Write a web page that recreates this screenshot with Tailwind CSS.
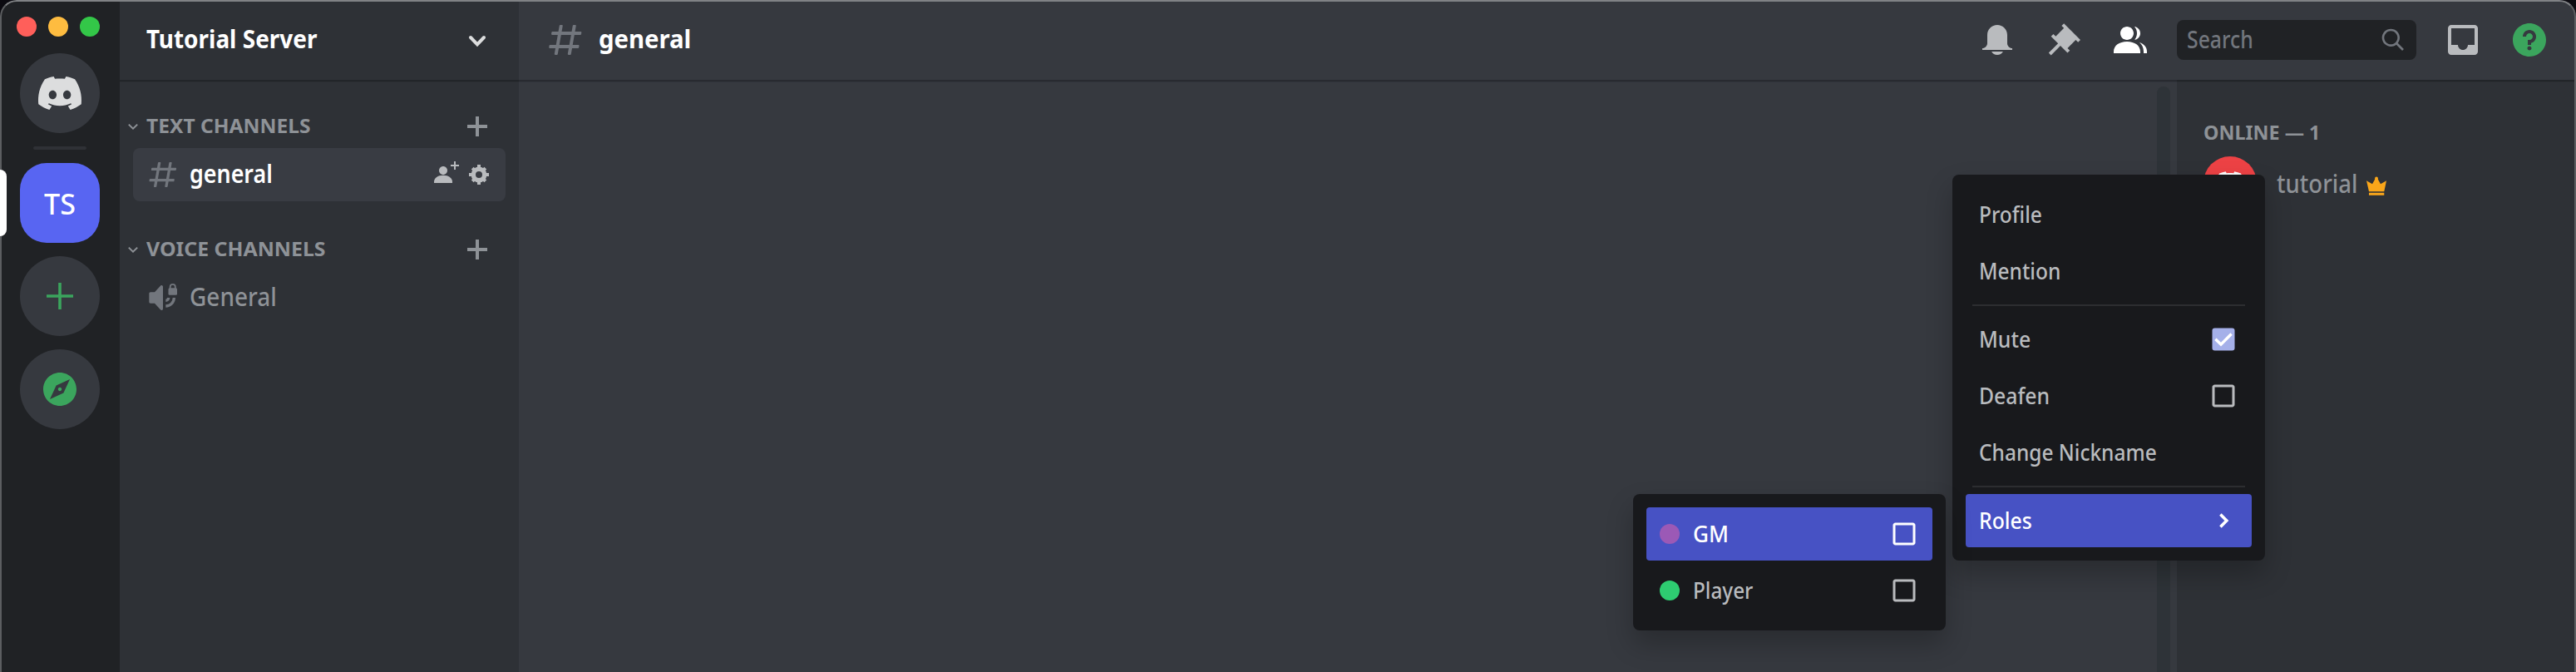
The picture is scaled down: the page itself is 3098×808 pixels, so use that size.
<!DOCTYPE html>
<html lang="en">
<head>
<meta charset="utf-8">
<title>Tutorial Server</title>
<script src="https://cdn.jsdelivr.net/npm/@tailwindcss/browser@4"></script>
</head>
<body class="bg-[#0b0a10] overflow-hidden font-['Noto_Sans',sans-serif]">
<svg class="hidden">
  <symbol id="hash" viewBox="0 0 24 24"><path fill-rule="evenodd" clip-rule="evenodd" d="M5.88657 21C5.57547 21 5.3399 20.7189 5.39427 20.4126L6.00001 17H2.59511C2.28449 17 2.04905 16.7198 2.10259 16.4138L2.27759 15.4138C2.31946 15.1746 2.52722 15 2.77011 15H6.35001L7.41001 9H4.00511C3.69449 9 3.45905 8.71977 3.51259 8.41381L3.68759 7.41381C3.72946 7.17456 3.93722 7 4.18011 7H7.76001L8.39677 3.41262C8.43914 3.17391 8.64664 3 8.88907 3H9.87344C10.1845 3 10.4201 3.28107 10.3657 3.58738L9.76001 7H15.76L16.3968 3.41262C16.4391 3.17391 16.6466 3 16.8891 3H17.8734C18.1845 3 18.4201 3.28107 18.3657 3.58738L17.76 7H21.1649C21.4755 7 21.711 7.28023 21.6574 7.58619L21.4824 8.58619C21.4406 8.82544 21.2328 9 20.9899 9H17.41L16.35 15H19.7549C20.0655 15 20.301 15.2802 20.2474 15.5862L20.0724 16.5862C20.0306 16.8254 19.8228 17 19.5799 17H16L15.3632 20.5874C15.3209 20.8261 15.1134 21 14.8709 21H13.8866C13.5755 21 13.3399 20.7189 13.3943 20.4126L14 17H8.00001L7.36325 20.5874C7.32088 20.8261 7.11337 21 6.87094 21H5.88657ZM9.41045 9L8.35045 15H14.3504L15.4104 9H9.41045Z"/></symbol>
  <symbol id="logo" viewBox="0 0 28 20"><path d="M23.0212 1.67671C21.3107 0.879656 19.5079 0.318797 17.6584 0C17.4062 0.461742 17.1749 0.934541 16.9708 1.4184C15.003 1.12145 12.9974 1.12145 11.0283 1.4184C10.819 0.934541 10.589 0.461744 10.3368 0.00546311C8.48074 0.324393 6.67795 0.885118 4.96746 1.68231C1.56727 6.77853 0.649666 11.7538 1.11108 16.652C3.10102 18.1418 5.3262 19.2743 7.69177 20C8.22338 19.2743 8.69519 18.4993 9.09812 17.691C8.32996 17.3997 7.58522 17.0424 6.87684 16.6135C7.06531 16.4762 7.24726 16.3387 7.42403 16.1847C11.5911 18.1749 16.408 18.1749 20.5763 16.1847C20.7531 16.3332 20.9351 16.4762 21.1171 16.6135C20.41 17.0369 19.6639 17.3997 18.897 17.691C19.3052 18.4993 19.7718 19.2689 20.3021 19.9945C22.6677 19.2689 24.8929 18.1364 26.8828 16.6466H26.8893C27.43 10.9731 25.9665 6.04728 23.0212 1.67671ZM9.68041 13.6383C8.39754 13.6383 7.34085 12.4453 7.34085 10.994C7.34085 9.54272 8.37155 8.34973 9.68041 8.34973C10.9893 8.34973 12.0395 9.54272 12.0187 10.994C12.0187 12.4453 10.9828 13.6383 9.68041 13.6383ZM18.3161 13.6383C17.0332 13.6383 15.9765 12.4453 15.9765 10.994C15.9765 9.54272 17.0124 8.34973 18.3161 8.34973C19.6184 8.34973 20.6751 9.54272 20.6543 10.994C20.6543 12.4453 19.6184 13.6383 18.3161 13.6383Z"/></symbol>
  <symbol id="add" viewBox="0 0 18 18"><path d="M15 10H10V15H8V10H3V8H8V3H10V8H15Z"/></symbol>
  <symbol id="box" viewBox="0 0 24 24"><path fill-rule="evenodd" d="M19 5V19H5V5H19ZM19 3H5C3.9 3 3 3.9 3 5V19C3 20.1 3.9 21 5 21H19C20.1 21 21 20.1 21 19V5C21 3.9 20.1 3 19 3Z"/></symbol>
</svg>

<div class="relative w-[3098px] h-[808px] flex rounded-t-[20px] overflow-hidden bg-[#36393f]">

  <!-- Server rail -->
  <nav class="relative w-[144px] shrink-0 bg-[#202225] flex flex-col items-center gap-4 pt-5">
    <div class="self-start ml-5 mb-1 flex gap-[14px]">
      <span class="size-6 rounded-full bg-[#ff5f5a]"></span>
      <span class="size-6 rounded-full bg-[#febc40]"></span>
      <span class="size-6 rounded-full bg-[#33c748]"></span>
    </div>
    <div class="size-24 shrink-0 rounded-full bg-[#36393f] flex items-center justify-center"><svg class="w-14 h-10 fill-[#dcddde]"><use href="#logo"/></svg></div>
    <div class="w-16 h-1 shrink-0 rounded-sm bg-[#2f3136]"></div>
    <div class="size-24 shrink-0 rounded-[32px] bg-[#5865f2] flex items-center justify-center text-white text-[34px] font-medium leading-none pt-px">TS</div>
    <div class="size-24 shrink-0 rounded-full bg-[#36393f] flex items-center justify-center"><svg class="size-12 fill-[#3ba55d]" viewBox="0 0 24 24"><path d="M20 11.1 12.9 11.1V4H11.1V11.1H4V12.9H11.1V20H12.9V12.9H20Z"/></svg></div>
    <div class="size-24 shrink-0 rounded-full bg-[#36393f] flex items-center justify-center"><svg class="size-12 fill-[#3ba55d]" viewBox="0 0 24 24"><path fill-rule="evenodd" d="M12 10.9C11.39 10.9 10.9 11.39 10.9 12C10.9 12.61 11.39 13.1 12 13.1C12.61 13.1 13.1 12.61 13.1 12C13.1 11.39 12.61 10.9 12 10.9ZM12 2C6.48 2 2 6.48 2 12C2 17.52 6.48 22 12 22C17.52 22 22 17.52 22 12C22 6.48 17.52 2 12 2ZM14.19 14.19L6 18L9.81 9.81L18 6L14.19 14.19Z"/></svg></div>
  </nav>

  <!-- Channel sidebar -->
  <aside class="w-[480px] shrink-0 bg-[#2e3136] flex flex-col">
    <header class="h-24 shrink-0 pl-8 pr-8 flex items-center justify-between shadow-[0_2px_0_rgba(4,4,5,0.2),0_3px_0_rgba(6,6,7,0.08)]">
      <h1 class="pb-[3px] text-white text-[30px] font-bold leading-none whitespace-nowrap origin-left scale-x-[0.932]">Tutorial Server</h1>
      <svg class="size-9" viewBox="0 0 36 36" fill="none" stroke="#dcddde" stroke-width="4" stroke-linecap="round"><path d="M10 15L18 23.3L26 15"/></svg>
    </header>

    <div class="pt-[38px] flex flex-col">
      <div class="h-9 pl-[10px] pr-8 flex items-center text-[#8e9297]">
        <svg class="w-3 h-3 mr-[10px]" viewBox="0 0 12 12" fill="none" stroke="#8e9297" stroke-width="2"><path d="M.8 3.6L6 8.6L11.2 3.6"/></svg>
        <h2 class="flex-1 pb-[2px] text-[24px] font-bold leading-none origin-left scale-x-[1.024]">TEXT CHANNELS</h2>
        <svg class="size-9 fill-[#8e9297]"><use href="#add"/></svg>
      </div>
      <div class="mt-2 ml-4 mr-4 h-16 rounded-lg bg-[#393c43] px-4 flex items-center">
        <svg class="size-10 mr-3 fill-[#72767d]"><use href="#hash"/></svg>
        <span class="flex-1 pb-[3px] text-white text-[30px] font-semibold leading-none origin-left scale-x-[0.895]">general</span>
        <svg class="size-8 mr-2 fill-[#b9bbbe]" viewBox="0 0 16 16"><path d="M14 2H16V3H14V5H13V3H11V2H13V0H14V2Z"/><path d="M6.5 8.00667C7.88 8.00667 9 6.88667 9 5.50667C9 4.12667 7.88 3.00667 6.5 3.00667C5.12 3.00667 4 4.12667 4 5.50667C4 6.88667 5.12 8.00667 6.5 8.00667Z"/><path d="M6.5 8.34C3.26 8.34 1 9.98666 1 12.34V13.0067H12V12.34C12 9.98 9.74 8.34 6.5 8.34Z"/></svg>
        <svg class="size-8" viewBox="0 0 32 32" fill="none" stroke="#b9bbbe"><circle cx="16" cy="16" r="6.7" stroke-width="5.4"/><path stroke-width="4" d="M16 4V8M16 24V28M4 16H8M24 16H28M8.2 8.2L11 11M21 21L23.8 23.8M8.2 23.8L11 21M21 11L23.8 8.2"/></svg>
      </div>

      <div class="mt-10 h-9 pl-[10px] pr-8 flex items-center text-[#8e9297]">
        <svg class="w-3 h-3 mr-[10px]" viewBox="0 0 12 12" fill="none" stroke="#8e9297" stroke-width="2"><path d="M.8 3.6L6 8.6L11.2 3.6"/></svg>
        <h2 class="flex-1 pb-[2px] text-[24px] font-bold leading-none origin-left scale-x-[1.035]">VOICE CHANNELS</h2>
        <svg class="size-9 fill-[#8e9297]"><use href="#add"/></svg>
      </div>
      <div class="mt-2 ml-4 mr-4 h-16 px-4 flex items-center">
        <svg class="size-10 mr-3 fill-[#72767d]" viewBox="0 0 24 24"><path d="M11.383 3.07904C11.009 2.92504 10.579 3.01004 10.293 3.29604L6 8.00204H3C2.45 8.00204 2 8.45304 2 9.00204V15.002C2 15.552 2.45 16.002 3 16.002H6L10.293 20.71C10.579 20.996 11.009 21.082 11.383 20.927C11.757 20.772 12 20.407 12 20.002V4.00204C12 3.59904 11.757 3.23204 11.383 3.07904Z"/><rect x="15.9" y="5" width="6.3" height="5" rx=".9"/><path fill="none" stroke="#72767d" stroke-width="1.1" d="M17.2 5.5V4.2a1.85 1.85 0 0 1 3.7 0V5.5"/><path fill="none" stroke="#72767d" stroke-width="2" d="M14 18A6 6 0 0 0 20 12M14 14A2 2 0 0 0 16 12"/></svg>
        <span class="flex-1 pb-[3px] text-[#8e9297] text-[31px] font-medium leading-none origin-left scale-x-[0.902]">General</span>
      </div>
    </div>
  </aside>

  <!-- Chat area -->
  <main class="flex-1 flex flex-col bg-[#36393f]">
    <header class="relative z-10 h-24 shrink-0 pl-8 pr-8 flex items-center shadow-[0_2px_0_rgba(4,4,5,0.2),0_3px_0_rgba(6,6,7,0.08)]">
      <svg class="size-12 mr-4 fill-[#72767d]"><use href="#hash"/></svg>
      <h2 class="flex-1 pb-[3px] text-white text-[31px] font-bold leading-none origin-left scale-x-[0.945]">general</h2>
      <svg class="size-12 mr-8 fill-[#b9bbbe]" viewBox="0 0 24 24"><path fill-rule="evenodd" d="M18 9V14C18 15.657 19.344 17 21 17V18H3V17C4.656 17 6 15.657 6 14V9C6 5.686 8.686 3 12 3C15.314 3 18 5.686 18 9ZM11.9999 21C10.5239 21 9.24793 20.19 8.55493 19H15.4449C14.7519 20.19 13.4759 21 11.9999 21Z"/></svg>
      <svg class="size-12 mr-8 fill-[#b9bbbe]" viewBox="0 0 24 24"><path d="M22 12L12.101 2.10101L10.686 3.51401L12.101 4.92901L7.15096 9.87801V9.88001L5.73596 8.46501L4.32196 9.88001L8.56496 14.122L2.90796 19.778L4.32196 21.192L9.97896 15.536L14.222 19.778L15.636 18.364L14.222 16.95L19.171 12H19.172L20.586 13.414L22 12Z"/></svg>
      <svg class="size-12 mr-8 fill-white" viewBox="0 0 24 24"><path d="M14 8.00598C14 10.211 12.206 12.006 10 12.006C7.795 12.006 6 10.211 6 8.00598C6 5.80098 7.794 4.00598 10 4.00598C12.206 4.00598 14 5.80098 14 8.00598ZM2 19.006C2 15.473 5.29 13.006 10 13.006C14.711 13.006 18 15.473 18 19.006V20.006H2V19.006Z"/><path d="M20.0001 20.006H22.0001V19.006C22.0001 16.4433 20.2697 14.4415 17.5213 13.5352C19.0621 14.9127 20.0001 16.8059 20.0001 19.006V20.006Z"/><path d="M14.8834 11.9077C16.6657 11.5044 18.0001 9.9077 18.0001 8.00598C18.0001 5.96916 16.4693 4.28218 14.4971 4.0367C15.4322 5.09511 16.0001 6.48524 16.0001 8.00598C16.0001 9.44888 15.4889 10.7742 14.6378 11.8102C14.7203 11.8418 14.8022 11.8743 14.8834 11.9077Z"/></svg>
      <div class="w-72 h-12 mr-8 pl-3 pr-3 rounded-lg bg-[#202225] flex items-center">
        <span class="flex-1 pb-[2px] text-[#72767d] text-[28px] font-medium leading-none origin-left scale-x-[0.885]">Search</span>
        <svg class="size-8 fill-[#72767d]" viewBox="0 0 24 24"><path d="M21.707 20.293L16.314 14.9C17.403 13.504 18 11.799 18 10C18 7.863 17.167 5.854 15.656 4.344C14.146 2.832 12.137 2 10 2C7.863 2 5.854 2.832 4.344 4.344C2.833 5.854 2 7.863 2 10C2 12.137 2.833 14.146 4.344 15.656C5.854 17.168 7.863 18 10 18C11.799 18 13.504 17.404 14.9 16.314L20.293 21.706L21.707 20.293ZM10 16C8.397 16 6.891 15.376 5.758 14.243C4.624 13.11 4 11.603 4 10C4 8.398 4.624 6.891 5.758 5.758C6.891 4.624 8.397 4 10 4C11.603 4 13.109 4.624 14.242 5.758C15.376 6.891 16 8.398 16 10C16 11.603 15.376 13.11 14.242 14.243C13.109 15.376 11.603 16 10 16Z"/></svg>
      </div>
      <svg class="size-12 mr-8 fill-[#b9bbbe]" viewBox="0 0 24 24"><path fill-rule="evenodd" d="M19 3H4.99C3.88 3 3.01 3.89 3.01 5L3 19C3 20.1 3.88 21 4.99 21H19C20.1 21 21 20.1 21 19V5C21 3.89 20.1 3 19 3ZM19 15H15C15 16.66 13.65 18 12 18C10.35 18 9 16.66 9 15H4.99V5H19V15Z"/></svg>
      <svg class="size-12 fill-[#3ba55d]" viewBox="0 0 24 24"><path fill-rule="evenodd" d="M12 2C6.486 2 2 6.487 2 12C2 17.515 6.486 22 12 22C17.514 22 22 17.515 22 12C22 6.487 17.514 2 12 2ZM12 18.25C11.31 18.25 10.75 17.691 10.75 17C10.75 16.31 11.31 15.75 12 15.75C12.69 15.75 13.25 16.31 13.25 17C13.25 17.691 12.69 18.25 12 18.25ZM13 13.875V15H11V12H12C13.104 12 14 11.103 14 10C14 8.896 13.104 8 12 8C10.896 8 10 8.896 10 10H8C8 7.795 9.795 6 12 6C14.205 6 16 7.795 16 10C16 11.861 14.723 13.429 13 13.875Z"/></svg>
    </header>

    <div class="flex-1 flex">
      <div class="flex-1 flex justify-end pt-2 pr-2"><div class="w-4 rounded-t-lg bg-[#2e3338]"></div></div>
      <section class="w-[480px] bg-[#2e3136] pt-[51px] pl-8">
        <h3 class="text-[#8e9297] text-[24px] font-bold leading-none origin-left scale-x-[0.972]">ONLINE — 1</h3>
        <div class="mt-[17px] h-16 flex items-center">
          <div class="size-16 rounded-full bg-[#ed4245] flex items-center justify-center"><svg class="w-10 h-[29px] fill-white"><use href="#logo"/></svg></div>
          <span class="ml-6 w-[97px] pt-[2px] text-[#8e9297] text-[30px] font-medium leading-none origin-left scale-x-[0.918]">tutorial</span>
          <svg class="size-7 ml-[9px] mt-2 fill-[#faa61a]" viewBox="0 0 28 28"><path d="M2 7.3L9 11.2L12.8 4.5H15.2L19 11.2L26 7.3L23.3 20.2H5Z"/><circle cx="14" cy="4.4" r="1.9"/><path d="M5 21.8H23.3V24.8H5Z"/></svg>
        </div>
      </section>
    </div>
  </main>

  <!-- Window edge and active server marker -->
  <div class="absolute left-0 top-0 right-0 bottom-0 rounded-t-[20px] border-t-2 border-x-2 border-t-[#808285] border-x-[#5c5e61] pointer-events-none z-20"></div>
  <div class="absolute z-30 left-0 top-[204px] w-2 h-20 rounded-r-lg bg-white"></div>

  <!-- User context menu -->
  <div class="absolute z-30 left-[2348px] top-[210px] w-[376px] h-[464px] rounded-lg bg-[#18191c] shadow-[0_16px_32px_rgba(0,0,0,0.24)] px-4 pt-4 flex flex-col text-[#b9bbbe] text-[27.5px] font-medium leading-none whitespace-nowrap">
    <div class="h-16 px-4 flex items-center"><span class="pb-px origin-left scale-x-[0.892]">Profile</span></div>
    <div class="mt-1 h-16 px-4 flex items-center"><span class="pb-px origin-left scale-x-[0.892]">Mention</span></div>
    <div class="my-2 mx-2 h-[2px] bg-[#2c2d30]"></div>
    <div class="h-16 px-4 flex items-center justify-between"><span class="pb-px origin-left scale-x-[0.905]">Mute</span><svg class="size-9" viewBox="0 0 24 24"><rect x="3" y="3" width="18" height="18" rx="2" fill="#a5b0e9"/><path fill="#fff" d="M10 17.6L4.8 12.6L6.4 11L10 14.5L17.6 6.9L19.2 8.5Z"/></svg></div>
    <div class="mt-1 h-16 px-4 flex items-center justify-between"><span class="pb-px origin-left scale-x-[0.9]">Deafen</span><svg class="size-9 fill-[#b9bbbe]"><use href="#box"/></svg></div>
    <div class="mt-1 h-16 px-4 flex items-center"><span class="pb-px origin-left scale-x-[0.89]">Change Nickname</span></div>
    <div class="my-2 mx-2 h-[2px] bg-[#2c2d30]"></div>
    <div class="h-16 px-4 flex items-center justify-between rounded bg-[#4752c4] text-white"><span class="pb-px origin-left scale-x-[0.9]">Roles</span><svg class="size-9" viewBox="0 0 36 36" fill="none" stroke="#fff" stroke-width="3.6"><path d="M14.4 10.6L21.8 18L14.4 25.4"/></svg></div>
  </div>

  <!-- Roles submenu -->
  <div class="absolute z-30 left-[1964px] top-[594px] w-[376px] h-[164px] rounded-lg bg-[#18191c] shadow-[0_16px_32px_rgba(0,0,0,0.24)] px-4 pt-4 flex flex-col text-[#b9bbbe] text-[27.5px] font-medium leading-none">
    <div class="h-16 px-4 flex items-center rounded bg-[#4752c4] text-white"><i class="size-6 mr-4 rounded-full bg-[#9b59b6]"></i><span class="flex-1 pb-px origin-left scale-x-[0.95]">GM</span><svg class="size-9 fill-white"><use href="#box"/></svg></div>
    <div class="mt-1 h-16 px-4 flex items-center"><i class="size-6 mr-4 rounded-full bg-[#2ecc71]"></i><span class="flex-1 pb-px origin-left scale-x-[0.884]">Player</span><svg class="size-9 fill-[#b9bbbe]"><use href="#box"/></svg></div>
  </div>
</div>
</body>
</html>
